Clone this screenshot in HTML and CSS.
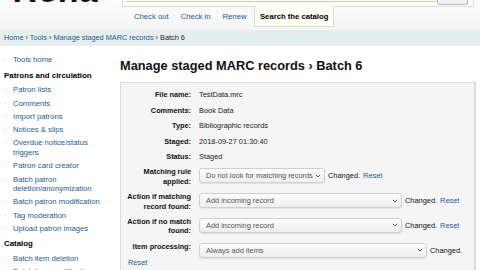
FILE: index.html
```html
<!DOCTYPE html>
<html lang="en">
<head>
    <meta charset="UTF-8">
    <meta name="viewport" content="width=device-width, initial-scale=1.0">
    <title>Manage staged MARC records › Batch 6</title>
    <link rel="stylesheet" href="styles.css">
</head>
<body>
    <div class="header">
        <div class="logo"><span>Koha</span></div>
        <div class="search">
            <div class="resident">
                <div class="query"></div>
                <button class="go" aria-label="Search"></button>
            </div>
            <ul class="tabs">
                <li><a href="#">Check out</a></li>
                <li><a href="#">Check in</a></li>
                <li><a href="#">Renew</a></li>
                <li class="active"><a href="#">Search the catalog</a></li>
            </ul>
        </div>
    </div>

    <div class="breadcrumbs">
        <a href="#">Home</a> › <a href="#">Tools</a> › <a href="#">Manage staged MARC records</a> › Batch 6
    </div>

    <div class="main">
        <div class="sidebar">
            <ul>
                <li><a href="#">Tools home</a></li>
            </ul>
            <h5>Patrons and circulation</h5>
            <ul>
                <li><a href="#">Patron lists</a></li>
                <li><a href="#">Comments</a></li>
                <li><a href="#">Import patrons</a></li>
                <li><a href="#">Notices &amp; slips</a></li>
                <li><a href="#">Overdue notice/status triggers</a></li>
                <li><a href="#">Patron card creator</a></li>
                <li><a href="#">Batch patron deletion/anonymization</a></li>
                <li><a href="#">Batch patron modification</a></li>
                <li><a href="#">Tag moderation</a></li>
                <li><a href="#">Upload patron images</a></li>
            </ul>
            <h5>Catalog</h5>
            <ul>
                <li><a href="#">Batch item deletion</a></li>
                <li><a href="#">Batch item modification</a></li>
            </ul>
        </div>

        <div class="content">
            <h1>Manage staged MARC records › Batch 6</h1>
            <div class="rows">
                <ol>
                    <li><span class="label">File name:</span> <span>TestData.mrc</span></li>
                    <li><span class="label">Comments:</span> <span>Book Data</span></li>
                    <li><span class="label">Type:</span> <span>Bibliographic records</span></li>
                    <li><span class="label">Staged:</span> <span>2018-09-27 01:30:40</span></li>
                    <li><span class="label">Status:</span> <span>Staged</span></li>
                    <li>
                        <span class="label">Matching rule applied:</span>
                        <span class="value">
                            <span class="select w-rule">Do not look for matching records <svg width="6" height="4" viewBox="0 0 6 4"><path d="M0.8 0.8 L3 3 L5.2 0.8" fill="none" stroke="#444" stroke-width="0.9"/></svg></span>
                            <span class="changed">Changed.</span> <a href="#">Reset</a>
                        </span>
                    </li>
                    <li>
                        <span class="label">Action if matching record found:</span>
                        <span class="value">
                            <span class="select w-action">Add incoming record <svg width="6" height="4" viewBox="0 0 6 4"><path d="M0.8 0.8 L3 3 L5.2 0.8" fill="none" stroke="#444" stroke-width="0.9"/></svg></span>
                            <span class="changed">Changed.</span> <a href="#">Reset</a>
                        </span>
                    </li>
                    <li>
                        <span class="label">Action if no match found:</span>
                        <span class="value">
                            <span class="select w-action">Add incoming record <svg width="6" height="4" viewBox="0 0 6 4"><path d="M0.8 0.8 L3 3 L5.2 0.8" fill="none" stroke="#444" stroke-width="0.9"/></svg></span>
                            <span class="changed">Changed.</span> <a href="#">Reset</a>
                        </span>
                    </li>
                    <li>
                        <span class="label">Item processing:</span>
                        <span class="value">
                            <span class="select w-items">Always add items <svg width="6" height="4" viewBox="0 0 6 4"><path d="M0.8 0.8 L3 3 L5.2 0.8" fill="none" stroke="#444" stroke-width="0.9"/></svg></span>
                            <span class="changed">Changed.</span>
                        </span>
                    </li>
                </ol>
                <a href="#" class="reset">Reset</a>
            </div>
        </div>
    </div>
</body>
</html>
```

FILE: styles.css
```css
body {
    margin: 0;
    font-family: "Liberation Sans", Arial, sans-serif;
    color: #222;
    background-color: white;
    overflow: hidden;
}
a {
    color: #1f5a8f;
    text-decoration: none;
}
ul, ol {
    list-style: none;
    margin: 0;
    padding: 0;
}

/* header with search box and tabs */
.header {
    display: flex;
    height: 30px;
    background: linear-gradient(#fdfdfd, #f3f4f4);
}
.logo {
    width: 122px;
    height: 3px;
    overflow: hidden;
}
.logo span {
    display: block;
    padding-left: 14px;
    margin-top: -27px;
    font-size: 34px;
    line-height: 34px;
    font-weight: bold;
    font-style: italic;
    color: #111;
}
.search {
    flex: 1;
    margin-right: 6px;
}
.resident {
    display: flex;
    justify-content: space-between;
    height: 6px;
    padding: 0 5px 0 3px;
    border: 1px solid #dcdcd0;
    border-top: 0;
    background-color: #fffff6;
}
.query {
    width: 310px;
    height: 1px;
    border-bottom: 1px solid #c9c9c0;
}
.go {
    width: 31px;
    height: 5px;
    padding: 0;
    border: 1px solid #b5b5b5;
    border-top: 0;
    border-radius: 0 0 3px 3px;
    background-color: #f2f2f2;
}
.tabs {
    display: flex;
    padding-left: 6px;
    font-size: 7.7px;
    line-height: 19px;
}
.tabs li {
    padding: 0 6px;
}
.tabs li.active {
    margin: -1px 0 0 2px;
    padding: 1px 5px 0 4.5px;
    height: 19px;
    border: 1px solid #dcdcd0;
    border-top: 0;
    background-color: #fffff6;
}
.tabs li.active a {
    color: #000;
    font-weight: bold;
}

.breadcrumbs {
    height: 16px;
    padding-left: 4px;
    font-size: 7.3px;
    line-height: 16px;
    background-color: #e6eff0;
}

/* main area */
.main {
    display: flex;
}
.sidebar {
    width: 112px;
    flex: none;
    padding: 7.35px 4px 0 4px;
    box-sizing: border-box;
}
.sidebar li {
    display: flex;
    padding: 1.85px 0;
    font-size: 7.7px;
    line-height: 9.6px;
}
.sidebar li::before {
    content: "·";
    width: 9px;
    flex: none;
    color: #999;
}
.sidebar h5 {
    margin: 4px 0 2.85px;
    padding-left: 0;
    font-size: 7.9px;
    line-height: 10px;
    color: #000;
}

.content {
    flex: 1;
    padding: 0 4px 0 8px;
}
h1 {
    margin: 11.6px 0 8.4px;
    font-size: 12.8px;
    line-height: 16px;
    color: #111;
}
.rows {
    padding-top: 7.3px;
    height: 200px;
    border: 1px solid #d8dede;
    border-right-width: 2px;
    background-color: #f5f5f5;
    font-size: 7.4px;
    line-height: 9.4px;
}
.rows li {
    display: grid;
    grid-template-columns: 70px auto;
    column-gap: 8px;
    padding-bottom: 6px;
}
.rows li:last-child {
    padding-bottom: 0;
}
.label {
    text-align: right;
    font-weight: bold;
    font-size: 7.3px;
    color: #111;
}
.value {
    display: flex;
    align-items: center;
    align-self: start;
    gap: 3px;
    margin-top: 1px;
}
.select {
    display: flex;
    justify-content: space-between;
    align-items: center;
    height: 15px;
    box-sizing: border-box;
    padding: 0 3px 0 6px;
    border: 1px solid #cfcfcf;
    border-radius: 3px;
    background: linear-gradient(#fdfdfd, #eeeeee);
    box-shadow: 0 1px 1px rgba(0,0,0,0.08);
    color: #555;
}
.w-rule {
    width: 126px;
}
.w-action {
    width: 203px;
}
.w-items {
    width: 228px;
}
.changed {
    color: #111;
}
.reset {
    display: inline-block;
    margin-left: 7px;
}
```
